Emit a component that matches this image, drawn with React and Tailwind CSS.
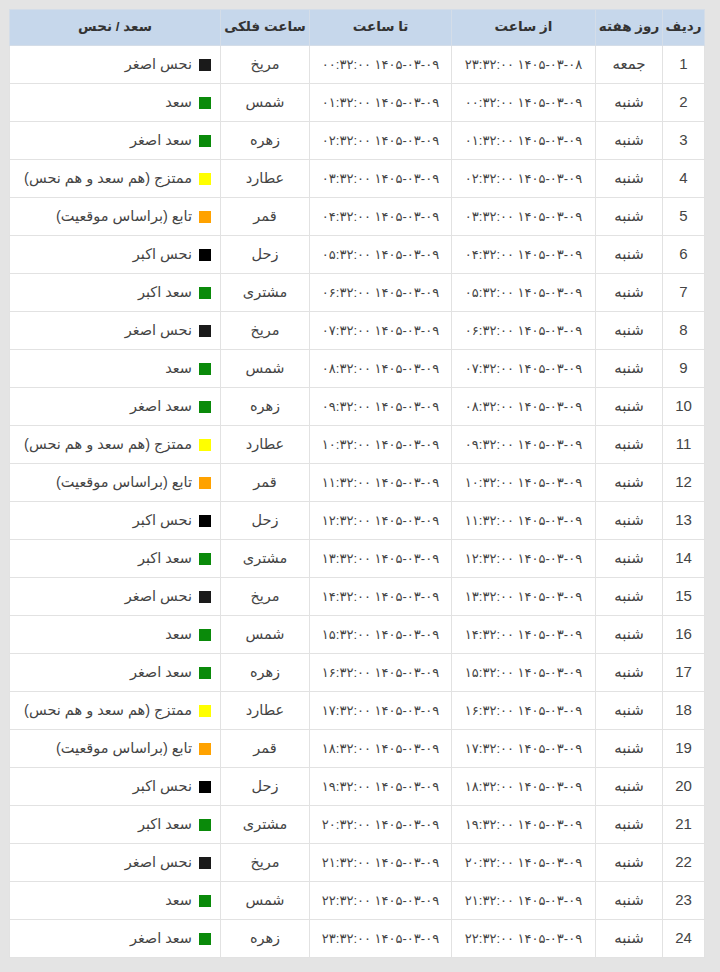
import React from 'react';

const planets = [
    { name: 'مریخ', status: 'نحس اصغر', color: 'bg-[#1a1a1a]' },
    { name: 'شمس', status: 'سعد', color: 'bg-[#0a8a0a]' },
    { name: 'زهره', status: 'سعد اصغر', color: 'bg-[#0a8a0a]' },
    { name: 'عطارد', status: 'ممتزج (هم سعد و هم نحس)', color: 'bg-[#ffff00]' },
    { name: 'قمر', status: 'تابع (براساس موقعیت)', color: 'bg-[#ffa200]' },
    { name: 'زحل', status: 'نحس اکبر', color: 'bg-[#000000]' },
    { name: 'مشتری', status: 'سعد اکبر', color: 'bg-[#0a8a0a]' },
];

const fa = (s) => String(s).replace(/[0-9]/g, (d) => '۰۱۲۳۴۵۶۷۸۹'[d]);
const pad = (n) => String(n).padStart(2, '0');

const rows = Array.from({ length: 24 }, (_, i) => {
    const fromDate = i === 0 ? '1405-03-08' : '1405-03-09';
    const fromHour = i === 0 ? 23 : i - 1;
    return {
        id: i + 1,
        day: i === 0 ? 'جمعه' : 'شنبه',
        from: fa(`${fromDate} ${pad(fromHour)}:32:00`),
        to: fa(`1405-03-09 ${pad(i)}:32:00`),
        planet: planets[i % 7],
    };
});

export default function App() {
    return (
        <div
            dir="rtl"
            className="min-h-[972px] bg-[#e4e4e4] pt-[9px] pr-[15px] pl-[10px]"
            style={{ fontFamily: '"Liberation Sans", "DejaVu Sans", sans-serif' }}
        >
            <table className="w-[695px] table-fixed border-collapse bg-white text-[14.5px] text-[#444]">
                <colgroup>
                    <col className="w-[42px]" />
                    <col className="w-[67px]" />
                    <col className="w-[144px]" />
                    <col className="w-[142px]" />
                    <col className="w-[89px]" />
                    <col className="w-[211px]" />
                </colgroup>
                <thead>
                    <tr className="h-[36px] bg-[#c6d7eb] text-[#333] text-[13.5px] font-bold">
                        <th className="border border-[#d4dde8] font-bold">ردیف</th>
                        <th className="border border-[#d4dde8] font-bold whitespace-nowrap">روز هفته</th>
                        <th className="border border-[#d4dde8] font-bold">از ساعت</th>
                        <th className="border border-[#d4dde8] font-bold">تا ساعت</th>
                        <th className="border border-[#d4dde8] font-bold">ساعت فلکی</th>
                        <th className="border border-[#d4dde8] font-bold">سعد / نحس</th>
                    </tr>
                </thead>
                <tbody>
                    {rows.map((row) => (
                        <tr key={row.id} className="h-[38px]">
                            <td className="border border-[#e2e2e2] text-center text-[15px]">{row.id}</td>
                            <td className="border border-[#e2e2e2] text-center text-[15px]">{row.day}</td>
                            <td className="border border-[#e2e2e2] text-center text-[13px] whitespace-nowrap">{row.from}</td>
                            <td className="border border-[#e2e2e2] text-center text-[13px] whitespace-nowrap">{row.to}</td>
                            <td className="border border-[#e2e2e2] text-center">{row.planet.name}</td>
                            <td className="border border-[#e2e2e2] pr-[9px] whitespace-nowrap">
                                <div className="flex items-center gap-[7px]">
                                    <span className={`inline-block w-[12px] h-[12px] shrink-0 ${row.planet.color}`} />
                                    <span>{row.planet.status}</span>
                                </div>
                            </td>
                        </tr>
                    ))}
                </tbody>
            </table>
        </div>
    );
}
